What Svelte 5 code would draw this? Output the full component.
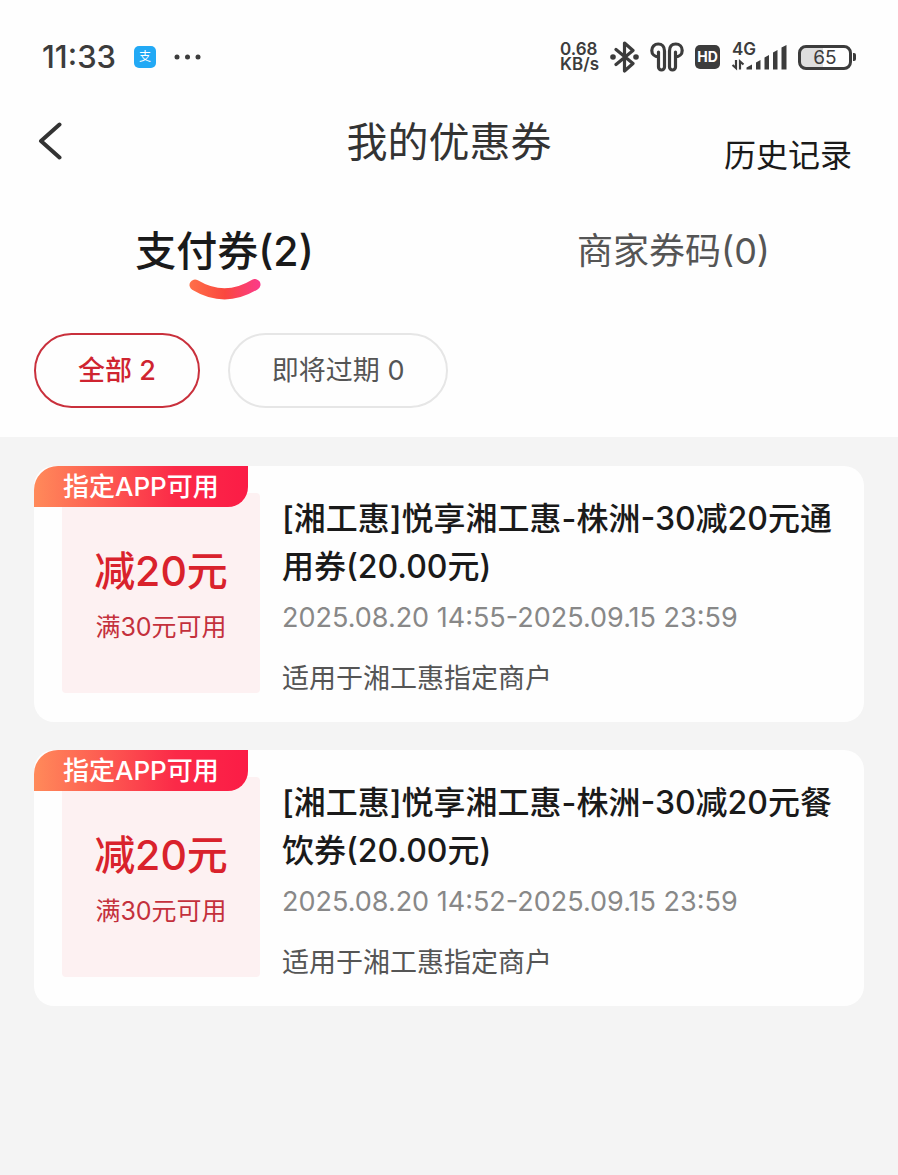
<script lang="ts">
	let activeTab = $state("pay");
	let activeFilter = $state("all");

	const tabs = [
		{ id: "pay", label: "支付券", count: 2 },
		{ id: "merchant", label: "商家券码", count: 0 },
	];

	const filters = [
		{ id: "all", label: "全部", count: 2 },
		{ id: "expiring", label: "即将过期", count: 0 },
	];

	const coupons = [
		{
			title: "[湘工惠]悦享湘工惠-株洲-30减20元通用券(20.00元)",
			period: "2025.08.20 14:55-2025.09.15 23:59",
		},
		{
			title: "[湘工惠]悦享湘工惠-株洲-30减20元餐饮券(20.00元)",
			period: "2025.08.20 14:52-2025.09.15 23:59",
		},
	];
</script>

<div class="page">
	<div class="top">
		<div class="status">
			<span class="clock">11:33</span>
			<span class="pay-icon">支</span>
			<svg class="dots" width="28" height="6" viewBox="0 0 28 6" aria-hidden="true">
				<circle cx="3" cy="3" r="2.5" />
				<circle cx="13.5" cy="3" r="2.5" />
				<circle cx="24" cy="3" r="2.5" />
			</svg>

			<div class="indicators">
				<span class="speed">0.68<br />KB/s</span>
				<svg width="29" height="32" viewBox="0 0 29 32" aria-hidden="true">
					<path
						d="M6 8.5 L23 22.5 L14.5 30 V2 L23 9.5 L6 23.5"
						fill="none"
						stroke="#3c3c3c"
						stroke-width="3.2"
						stroke-linejoin="round"
						stroke-linecap="round"
					/>
					<circle cx="3" cy="16" r="2.8" />
					<circle cx="26" cy="16" r="2.8" />
				</svg>
				<svg width="34" height="30" viewBox="0 0 34 30" aria-hidden="true">
					<g fill="none" stroke="#3c3c3c" stroke-width="3.2" stroke-linejoin="round" stroke-linecap="round">
						<path d="M8.5 10 V25 A3 3 0 0 0 14.5 25 V9 C14.5 4.500 12 2 8.2 2 C4.5 2 1.8 4.8 1.8 8.5 C1.8 12 4.5 14.8 8.5 14.8" />
						<path d="M25.5 10 V17 M25.5 14.8 C29.5 14.8 32.2 12 32.2 8.5 C32.2 4.8 29.5 2 25.8 2 C22 2 19.5 4.5 19.5 9 V25 A3 3 0 0 0 25.5 25 V14.8" />
					</g>
				</svg>
				<span class="hd">HD</span>
				<svg class="signal" width="56" height="40" viewBox="0 -4 56 40" aria-label="4G">
					<text x="1" y="14">4G</text>
					<path d="M5 19 V27 L1.5 24 M9 28.5 V20.500 L12.500 23.5" fill="none" stroke="#3c3c3c" stroke-width="2.2" />
					<path d="M15.5 26.5 L21 23.5 V28.5 H15.5 Z M25 21.5 L29.500 19 V28.5 H25 Z M33.5 16.5 L38 14 V28.5 H33.5 Z M42 11.5 L46.5 9 V28.5 H42 Z M50.5 6.500 L55.500 4 V28.5 H50.5 Z" />
				</svg>
				<span class="battery"><span class="level">65</span></span>
			</div>
		</div>

		<header class="nav">
			<button class="back" aria-label="返回">
				<svg width="24" height="38" viewBox="0 0 24 38" aria-hidden="true">
					<path
						d="M21.5 2.5 L3 19 L21.5 35.5"
						fill="none"
						stroke="#333"
						stroke-width="4"
						stroke-linecap="round"
						stroke-linejoin="round"
					/>
				</svg>
			</button>
			<h1>我的优惠券</h1>
			<a class="history" href="#history">历史记录</a>
		</header>

		<div class="tabs" role="tablist">
			{#each tabs as tab}
				<button
					class="tab"
					class:active={activeTab === tab.id}
					role="tab"
					aria-selected={activeTab === tab.id}
					onclick={() => (activeTab = tab.id)}
				>
					<span>{tab.label}({tab.count})</span>
					{#if activeTab === tab.id}
						<svg width="72" height="22" viewBox="0 0 72 22" aria-hidden="true">
							<defs>
								<linearGradient id="smile" x1="0" x2="72" y1="0" y2="0" gradientUnits="userSpaceOnUse">
									<stop offset="0" stop-color="#ff7048" />
									<stop offset="0.5" stop-color="#fa483f" />
									<stop offset="1" stop-color="#fb3a8c" />
								</linearGradient>
							</defs>
							<path
								d="M6 6 Q36 24 66 5.5"
								fill="none"
								stroke="url(#smile)"
								stroke-width="11"
								stroke-linecap="round"
							/>
						</svg>
					{/if}
				</button>
			{/each}
		</div>

		<div class="filters">
			{#each filters as filter}
				<button
					class="chip"
					class:active={activeFilter === filter.id}
					onclick={() => (activeFilter = filter.id)}
				>
					{filter.label} {filter.count}
				</button>
			{/each}
		</div>
	</div>

	<main class="list">
		{#each coupons as coupon}
			<article class="coupon">
				<span class="ribbon">指定APP可用</span>
				<div class="value">
					<strong>减20元</strong>
					<span>满30元可用</span>
				</div>
				<div class="info">
					<h2>{coupon.title}</h2>
					<p class="period">{coupon.period}</p>
					<p class="scope">适用于湘工惠指定商户</p>
				</div>
			</article>
		{/each}
	</main>
</div>

<style>
	:global(body) {
		background: #f4f4f4;
	}

	.page {
		min-height: 100vh;
		background: #f4f4f4;
		color: #1a1a1a;
		font-family: Inter, "Noto Sans CJK SC", sans-serif;
	}

	.top {
		padding-bottom: 29px;
		background: #fefefe;
	}

	button {
		padding: 0;
		border: 0;
		background: none;
		color: inherit;
		font: inherit;
		cursor: pointer;
	}

	svg {
		display: block;
		flex: none;
	}

	.status {
		display: flex;
		align-items: center;
		height: 44px;
		padding: 35px 42px;
		color: #3c3c3c;
		fill: #3c3c3c;
	}

	.clock {
		font-size: 31px;
		font-weight: 500;
		line-height: 44px;
	}

	.pay-icon {
		width: 22px;
		margin: 0 18px;
		border-radius: 5px;
		background: #22a9f5;
		color: #fff;
		font-size: 12px;
		line-height: 22px;
		text-align: center;
	}

	.indicators {
		display: flex;
		align-items: center;
		gap: 11px;
		margin-left: auto;
	}

	.speed {
		font-size: 17px;
		font-weight: 600;
		line-height: 15px;
	}

	.hd {
		width: 25px;
		border-radius: 5px;
		background: #3c3c3c;
		color: #fff;
		font-size: 14px;
		font-weight: 700;
		line-height: 24px;
		text-align: center;
	}

	.signal text {
		font-size: 17px;
		font-weight: 600;
	}

	.battery {
		display: flex;
		align-items: center;
	}

	.battery::after {
		width: 3px;
		height: 8px;
		margin-left: 1px;
		border-radius: 0 2px 2px 0;
		background: #3c3c3c;
		content: "";
	}

	.level {
		width: 48px;
		border: 3px solid #3c3c3c;
		border-radius: 8px;
		background: linear-gradient(90deg, #dedede 46%, #fefefe 46%);
		font-size: 19px;
		line-height: 19px;
		text-align: center;
	}

	.nav {
		display: grid;
		grid-template-columns: 1fr auto 1fr;
		height: 64px;
		padding: 0 38px;
	}

	.back {
		height: 54px;
		justify-self: start;
	}

	h1 {
		margin: 0;
		color: #333;
		font-size: 41px;
		font-weight: 400;
		line-height: 56px;
	}

	.history {
		align-self: end;
		justify-self: end;
		padding-right: 8px;
		color: #1a1a1a;
		font-size: 32px;
		line-height: 44px;
		text-decoration: none;
	}

	.tabs {
		display: grid;
		grid-template-columns: 1fr 1fr;
		margin-top: 45px;
	}

	.tab {
		display: flex;
		flex-direction: column;
		align-items: center;
		height: 78px;
		color: #555;
		font-size: 36px;
		line-height: 56px;
	}

	.tab.active {
		color: #1a1a1a;
		font-size: 41px;
		font-weight: 500;
	}

	.filters {
		display: flex;
		gap: 28px;
		margin-top: 32px;
		padding: 0 34px;
	}

	.chip {
		padding: 0 42px;
		border: 2px solid #e6e6e6;
		border-radius: 38px;
		color: #555;
		font-size: 27px;
		line-height: 71px;
	}

	.chip.active {
		border-color: #c9303c;
		color: #cf2430;
		font-weight: 500;
	}

	.list {
		display: grid;
		gap: 28px;
		padding: 29px 34px;
	}

	.coupon {
		position: relative;
		display: flex;
		gap: 22px;
		padding: 27px 28px 29px;
		border-radius: 20px;
		background: #fefefe;
	}

	.ribbon {
		position: absolute;
		top: 0;
		left: 0;
		padding: 0 29px;
		border-radius: 24px 0 20px 0;
		background: linear-gradient(90deg, #ff8a5a, #fb2a48 66%, #fb1c46);
		color: #fff;
		font-size: 26px;
		font-weight: 500;
		line-height: 41px;
	}

	.value {
		display: flex;
		flex: none;
		flex-direction: column;
		align-items: center;
		justify-content: center;
		gap: 8px;
		box-sizing: border-box;
		width: 198px;
		height: 200px;
		padding-top: 4px;
		border-radius: 4px;
		background: #fdf1f2;
		color: #c4303c;
		font-size: 25px;
		line-height: 40px;
	}

	.value strong {
		color: #d9222c;
		font-size: 41px;
		font-weight: 500;
		line-height: 56px;
	}

	.info {
		padding-top: 2px;
	}

	h2 {
		margin: 0;
		font-size: 32px;
		font-weight: 500;
		line-height: 48px;
	}

	p {
		margin: 0;
		line-height: 28px;
	}

	.period {
		margin-top: 13px;
		color: #888;
		font-size: 27px;
	}

	.scope {
		margin-top: 33px;
		color: #555;
		font-size: 27px;
	}
</style>
